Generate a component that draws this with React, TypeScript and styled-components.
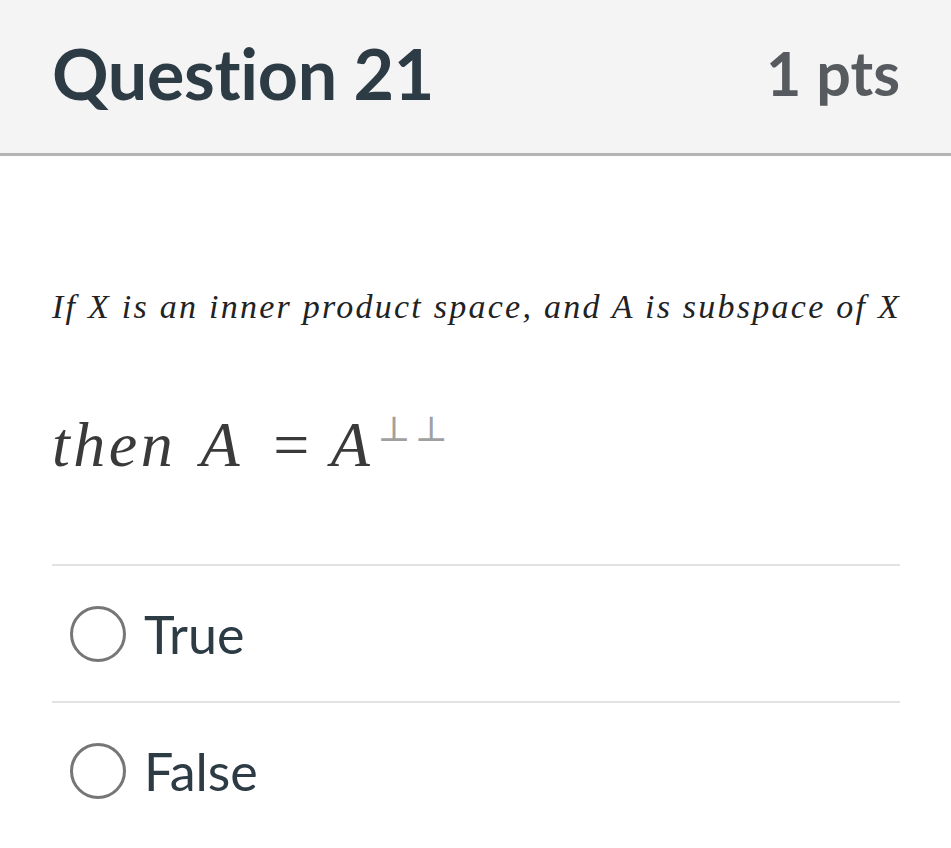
import styled, { createGlobalStyle } from 'styled-components';

const GlobalStyle = createGlobalStyle`
  html, body { margin: 0; padding: 0; background: #ffffff; }
  body { font-family: Lato, "Noto Sans", sans-serif; color: #2d3b45; }
`;

const Card = styled.div`
  width: 951px;
  min-height: 848px;
  background: #fff;
`;

const Header = styled.header`
  height: 156px;
  box-sizing: border-box;
  display: flex;
  align-items: center;
  justify-content: space-between;
  padding: 0 51px 8px 52px;
  background: #f4f4f4;
  border-bottom: 3px solid #b4b4b4;
`;

const Title = styled.h2`
  margin: 0;
  font-size: 70px;
  font-weight: 700;
  color: #2d3b45;
  letter-spacing: -0.3px;
`;

const Points = styled.span`
  font-size: 61px;
  font-weight: 700;
  color: #575b5f;
`;

const Body = styled.div`
  padding: 132px 51px 0 52px;
`;

const MathLine = styled.p<{ $size: number; $color: string; $spacing: number }>`
  margin: 0;
  font-family: "Liberation Serif", "DejaVu Serif", serif;
  font-style: italic;
  font-size: ${(p) => p.$size}px;
  letter-spacing: ${(p) => p.$spacing}px;
  color: ${(p) => p.$color};
  white-space: nowrap;
`;

const Sup = styled.sup`
  font-style: normal;
  font-size: 0.55em;
  color: #a0a0a0;
  letter-spacing: 4px;
  margin-left: 4px;
  vertical-align: 0.72em;
  line-height: 0;
`;

const Upright = styled.span`
  font-style: normal;
  margin: 0 18px 0 30px;
`;

const Answers = styled.div`
  margin-top: 82px;
`;

const Answer = styled.label`
  display: flex;
  align-items: center;
  gap: 18px;
  height: 135px;
  border-top: 2px solid #e2e2e2;
  padding-left: 18px;
  font-size: 52px;
  color: #2d3b45;
`;

const Radio = styled.span`
  width: 56px;
  height: 56px;
  box-sizing: border-box;
  border: 3px solid #767676;
  border-radius: 50%;
  flex: none;
`;

export default function App() {
  return (
    <>
      <GlobalStyle />
      <Card>
        <Header>
          <Title>Question 21</Title>
          <Points>1 pts</Points>
        </Header>
        <Body>
          <MathLine $size={34} $color="#222" $spacing={2.25}>
            If X is an inner product space, and A is subspace of X
          </MathLine>
          <MathLine $size={64} $color="#3a3a3a" $spacing={3.5} style={{ marginTop: 82, wordSpacing: 6 }}>
            then A<Upright>=</Upright>A<Sup>⊥⊥</Sup>
          </MathLine>
          <Answers>
            {['True', 'False'].map((a) => (
              <Answer key={a}>
                <Radio />
                {a}
              </Answer>
            ))}
          </Answers>
        </Body>
      </Card>
    </>
  );
}
